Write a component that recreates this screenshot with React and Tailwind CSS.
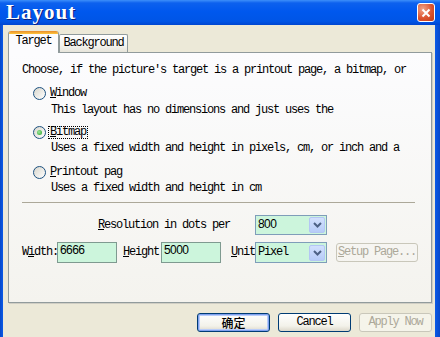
function Radio({ checked }) {
  return (
    <div className="w-[13px] h-[13px] shrink-0 rounded-full border border-[#1c5180] bg-[linear-gradient(135deg,#d8d6cc,#ffffff)] flex items-center justify-center">
      {checked && (
        <div className="w-[5px] h-[5px] rounded-full bg-[radial-gradient(circle_at_40%_40%,#9ee89e,#21a121)]" />
      )}
    </div>
  );
}

function Chevron() {
  return (
    <svg width="9" height="6" viewBox="0 0 9 6">
      <path d="M1 1 L4.5 4.5 L8 1" fill="none" stroke="#4d6185" strokeWidth="2" />
    </svg>
  );
}

function Combo({ children, h }) {
  return (
    <div className={`w-[72px] ${h} border border-[#7f9db9] bg-[#ccf5dc] flex items-center shrink-0`}>
      <div className="flex-1 pl-[2px] leading-[13px]">{children}</div>
      <div className="w-[16px] h-[16px] mr-[1px] rounded-[2px] border border-[#b4c6f4] bg-[linear-gradient(to_bottom,#d2e0fd,#b6cbf8)] flex items-center justify-center">
        <Chevron />
      </div>
    </div>
  );
}

function Label({ first, rest, focus }) {
  return (
    <span
      className={`ml-[2px] pl-[1px] pr-[1px] h-[13px] leading-[11px] border ${
        focus ? "border-dotted border-black" : "border-transparent"
      }`}
    >
      <u className="underline-offset-[1px]">{first}</u>
      {rest}
    </span>
  );
}

function XPButton({ children, def, disabled, cjk }) {
  let cls =
    "w-[73px] h-[19px] rounded-[3px] border flex items-center justify-center leading-[13px] ";
  if (disabled) {
    cls += "border-[#c9c7ba] bg-[#f5f4ea] text-[#aca899]";
  } else {
    cls +=
      "border-[#003c74] bg-[linear-gradient(to_bottom,#ffffff,#f3f2ea_70%,#dcd8cb)] text-black";
    if (def) cls += " shadow-[inset_0_0_0_1px_#7fa0ef,inset_0_0_0_2px_#b9cdfa]";
  }
  return (
    <div className={cls}>
      <span
        className={
          cjk
            ? "font-['Noto_Sans_CJK_SC','Noto_Sans_CJK_JP',sans-serif] text-[12px] tracking-normal font-medium"
            : ""
        }
      >
        {children}
      </span>
    </div>
  );
}

export default function App() {
  return (
    <div className="w-[440px] h-[337px] overflow-hidden flex flex-col bg-[#ece9d8] font-['Liberation_Mono','Courier_New',monospace] text-[12px] tracking-[-1.2px] text-black">
      {/* Title bar */}
      <div className="h-[25px] shrink-0 flex items-center justify-between pl-[6px] pr-[5px] bg-[linear-gradient(to_bottom,#3d8ffa_0%,#0d61ee_12%,#0058ee_45%,#0055e6_85%,#0046d0_100%)]">
        <span className="font-['Liberation_Serif',serif] font-bold text-[21px] tracking-[1px] text-white leading-none [text-shadow:1px_1px_#0a2280]">
          Layout
        </span>
        <div className="w-[18px] h-[19px] rounded-[3px] border border-white bg-[radial-gradient(circle_at_30%_30%,#f0a488,#dc5430_55%,#c23a14)] flex items-center justify-center">
          <svg width="10" height="10" viewBox="0 0 10 10">
            <path d="M1.5 1.5 L8.5 8.5 M8.5 1.5 L1.5 8.5" stroke="white" strokeWidth="2" />
          </svg>
        </div>
      </div>

      <div className="flex flex-1 min-h-0">
        <div className="w-[3px] bg-[linear-gradient(to_right,#0848c8,#0a5ae8)]" />
        <div className="flex-1 pt-[6px] pl-[5px] pr-[3px] flex flex-col">
          {/* Tabs */}
          <div className="flex items-end h-[21px] relative z-10 shrink-0">
            <div className="w-[51px] h-[22px] -mb-[1px] bg-[#fcfcfe] border-x border-[#919b9c] rounded-t-[3px] flex flex-col overflow-hidden">
              <div className="h-[3px] bg-[linear-gradient(to_bottom,#e68b2c,#ffc73c)]" />
              <div className="flex-1 flex items-start justify-center pt-[1px] leading-[13px]">Target</div>
            </div>
            <div className="w-[69px] h-[18px] border border-b-0 border-[#919b9c] rounded-t-[2px] bg-[linear-gradient(to_bottom,#ffffff,#f3f3ef_60%,#e6e4da)] flex items-center justify-center leading-[13px]">
              Background
            </div>
          </div>

          {/* Panel */}
          <div className="w-[424px] h-[251px] shrink-0 border border-[#919b9c] bg-[linear-gradient(to_bottom,#fcfcfe,#f4f3ee)] flex flex-col shadow-[1px_1px_0_#d0cec4]">
            <div className="mt-[11px] ml-[13px] h-[13px] leading-[13px]">
              Choose, if the picture's target is a printout page, a bitmap, or
            </div>

            <div className="mt-[10px] ml-[24px] h-[13px] flex items-center">
              <Radio />
              <Label first="W" rest="indow" />
            </div>
            <div className="mt-[4px] ml-[42px] h-[13px] leading-[13px]">
              This layout has no dimensions and just uses the
            </div>

            <div className="mt-[9px] ml-[24px] h-[13px] flex items-center">
              <Radio checked />
              <Label first="B" rest="itmap" focus />
            </div>
            <div className="mt-[3px] ml-[42px] h-[13px] leading-[13px]">
              Uses a fixed width and height in pixels, cm, or inch and a
            </div>

            <div className="mt-[11px] ml-[24px] h-[13px] flex items-center">
              <Radio />
              <Label first="P" rest="rintout pag" />
            </div>
            <div className="mt-[3px] ml-[42px] h-[13px] leading-[13px]">
              Uses a fixed width and height in cm
            </div>

            <div className="mt-[7px] ml-[13px] w-[393px] h-[1px] bg-[#aca899]" />

            <div className="mt-[12px] h-[20px] flex items-center">
              <span className="ml-[89px] w-[157px] leading-[13px]">
                <u>R</u>esolution in dots per
              </span>
              <Combo h="h-[20px]">
                <span className="font-['Liberation_Sans',sans-serif] text-[12px] tracking-[-0.6px]">800</span>
              </Combo>
            </div>

            <div className="mt-[7px] h-[21px] flex items-center">
              <span className="ml-[13px] w-[35px] leading-[13px]">
                W<u>i</u>dth:
              </span>
              <div className="w-[60px] h-[21px] border border-[#7f9a90] bg-[#ccf5dc] pl-[2px] font-['Liberation_Sans',sans-serif] text-[12px] tracking-[-0.6px] leading-[14px]">
                6666
              </div>
              <span className="ml-[6px] w-[38px] leading-[13px]">
                <u>H</u>eight
              </span>
              <div className="w-[60px] h-[21px] border border-[#7f9a90] bg-[#ccf5dc] pl-[2px] font-['Liberation_Sans',sans-serif] text-[12px] tracking-[-0.6px] leading-[14px]">
                5000
              </div>
              <span className="ml-[10px] w-[24px] leading-[13px]">
                <u>U</u>nit
              </span>
              <Combo h="h-[21px]">Pixel</Combo>
              <div className="ml-[9px] w-[82px] h-[19px] rounded-[3px] border border-[#c9c7ba] flex items-center justify-center text-[#aca899] leading-[13px]">
                <span>
                  <u>S</u>etup Page...
                </span>
              </div>
            </div>
          </div>

          {/* Buttons */}
          <div className="mt-[10px] flex justify-end gap-[8px] shrink-0">
            <XPButton def cjk>确定</XPButton>
            <XPButton>Cancel</XPButton>
            <XPButton disabled>Apply Now</XPButton>
          </div>
        </div>
        <div className="w-[5px] bg-[linear-gradient(to_right,#0a5ae8,#0848c8)]" />
      </div>
    </div>
  );
}
